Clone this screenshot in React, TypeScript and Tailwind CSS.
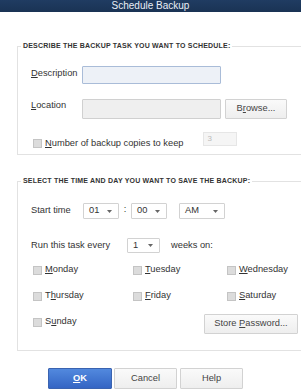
import React from 'react';

const font = { fontFamily: '"Liberation Sans", Arial, sans-serif' };

function Key({ children }: { children: React.ReactNode }) {
  return <span className="underline underline-offset-1">{children}</span>;
}

function Check() {
  return <span className="block w-[9px] h-[9px] bg-[#dcdcdc] border border-[#c4c4c4] shrink-0" />;
}

function Arrow() {
  return (
    <svg width="5" height="3" viewBox="0 0 5 3" className="shrink-0">
      <path d="M0 0h5L2.5 3z" fill="#666" />
    </svg>
  );
}

function Select({ value, w }: { value: string; w: string }) {
  return (
    <div className={`${w} h-full flex items-center justify-between pl-[5px] pr-[6px] bg-white border border-[#d2d2d2] rounded-[1px] text-[#333]`}>
      <span>{value}</span>
      <Arrow />
    </div>
  );
}

function Day({ label }: { label: React.ReactNode }) {
  return (
    <div className="flex items-center gap-[3px] h-[12px]">
      <Check />
      <span>{label}</span>
    </div>
  );
}

const btn =
  'flex items-center justify-center bg-gradient-to-b from-[#fafafa] to-[#eeeeee] border border-[#d2d2d2] rounded-[1px] text-[#444]';

export default function App() {
  return (
    <div className="w-[301px] h-[391px] bg-white overflow-hidden text-[9.3px] text-[#333]" style={font}>
      <div className="h-[12px] bg-gradient-to-b from-[#203c62] to-[#1a3354] flex justify-center overflow-hidden">
        <span className="text-[10px] leading-[11px] text-[#e8eef6]">Schedule Backup</span>
      </div>

      {/* Describe the backup */}
      <fieldset className="mt-[30px] ml-[17px] w-[310px] border border-[#e2e2e2] pl-[13px] pb-[8px]">
        <legend className="-ml-[10px] px-[2px] text-[7px] tracking-[0.2px] leading-[8px] font-bold text-[#333]">
          DESCRIBE THE BACKUP TASK YOU WANT TO SCHEDULE:
        </legend>
        <div className="mt-[16px] flex items-start h-[18px]">
          <span className="w-[51px] pt-[2px] leading-[10px]"><Key>D</Key>escription</span>
          <div className="w-[139px] h-[18px] bg-[#edf1f7] border border-[#a9bcd8] rounded-[1px]" />
        </div>
        <div className="mt-[15px] flex items-start h-[20px]">
          <span className="w-[51px] pt-[1px] leading-[10px]"><Key>L</Key>ocation</span>
          <div className="w-[139px] h-[20px] bg-[#efefef] border border-[#d0d0d0] rounded-[1px]" />
          <div className={`ml-[4px] w-[62px] h-[20px] ${btn}`}>
            <span>B<Key>r</Key>owse...</span>
          </div>
        </div>
        <div className="mt-[13px] flex items-start h-[14px]">
          <div className="ml-[2px] mt-[7px] flex items-center gap-[3px]">
            <Check />
            <span className="leading-[9px]"><Key>N</Key>umber of backup copies to keep</span>
          </div>
          <div className="ml-[19px] w-[34px] h-[14px] bg-[#f5f5f5] border border-[#e6e6e6] text-[#bbb] text-[8px] leading-[12px] pl-[4px]">3</div>
        </div>
      </fieldset>

      {/* Time and day */}
      <fieldset className="mt-[22px] ml-[17px] w-[310px] border border-[#e2e2e2] pl-[13px] pb-[16px]">
        <legend className="-ml-[10px] px-[2px] text-[7px] tracking-[0.2px] leading-[8px] font-bold text-[#333]">
          SELECT THE TIME AND DAY YOU WANT TO SAVE THE BACKUP:
        </legend>
        <div className="mt-[18px] flex items-center h-[16px]">
          <span className="w-[52px]">Start time</span>
          <Select value="01" w="w-[36px]" />
          <span className="w-[12px] text-center -mt-[3px]">:</span>
          <Select value="00" w="w-[36px]" />
          <div className="ml-[12px] h-full"><Select value="AM" w="w-[46px]" /></div>
        </div>
        <div className="mt-[19px] flex items-center h-[15px]">
          <span className="w-[96px]">Run this task every</span>
          <Select value="1" w="w-[33px]" />
          <span className="ml-[11px]">weeks on:</span>
        </div>
        <div className="ml-[2px] grid grid-cols-[100px_94px_1fr]">
          <div className="mt-[11px]"><Day label={<><Key>M</Key>onday</>} /></div>
          <div className="mt-[11px]"><Day label={<><Key>T</Key>uesday</>} /></div>
          <div className="mt-[11px]"><Day label={<><Key>W</Key>ednesday</>} /></div>
          <div className="mt-[14px]"><Day label={<>T<Key>h</Key>ursday</>} /></div>
          <div className="mt-[14px]"><Day label={<><Key>F</Key>riday</>} /></div>
          <div className="mt-[14px]"><Day label={<><Key>S</Key>aturday</>} /></div>
        </div>
        <div className="mt-[12px] ml-[2px] flex items-start h-[20px]">
          <div className="mt-[2px] w-[171px]"><Day label={<>S<Key>u</Key>nday</>} /></div>
          <div className={`w-[94px] h-[20px] ${btn}`}>
            <span>Store <Key>P</Key>assword...</span>
          </div>
        </div>
      </fieldset>

      <div className="mt-[17px] ml-[48px] flex gap-[2px] h-[21px]">
        <div className="w-[64px] flex items-center justify-center bg-gradient-to-b from-[#5289de] to-[#3465c4] border border-[#3a63b0] rounded-[1px] text-white font-bold">
          <span><Key>O</Key>K</span>
        </div>
        <div className={`w-[63px] ${btn}`}>Cancel</div>
        <div className={`ml-[1px] w-[63px] ${btn}`}>Help</div>
      </div>
    </div>
  );
}
